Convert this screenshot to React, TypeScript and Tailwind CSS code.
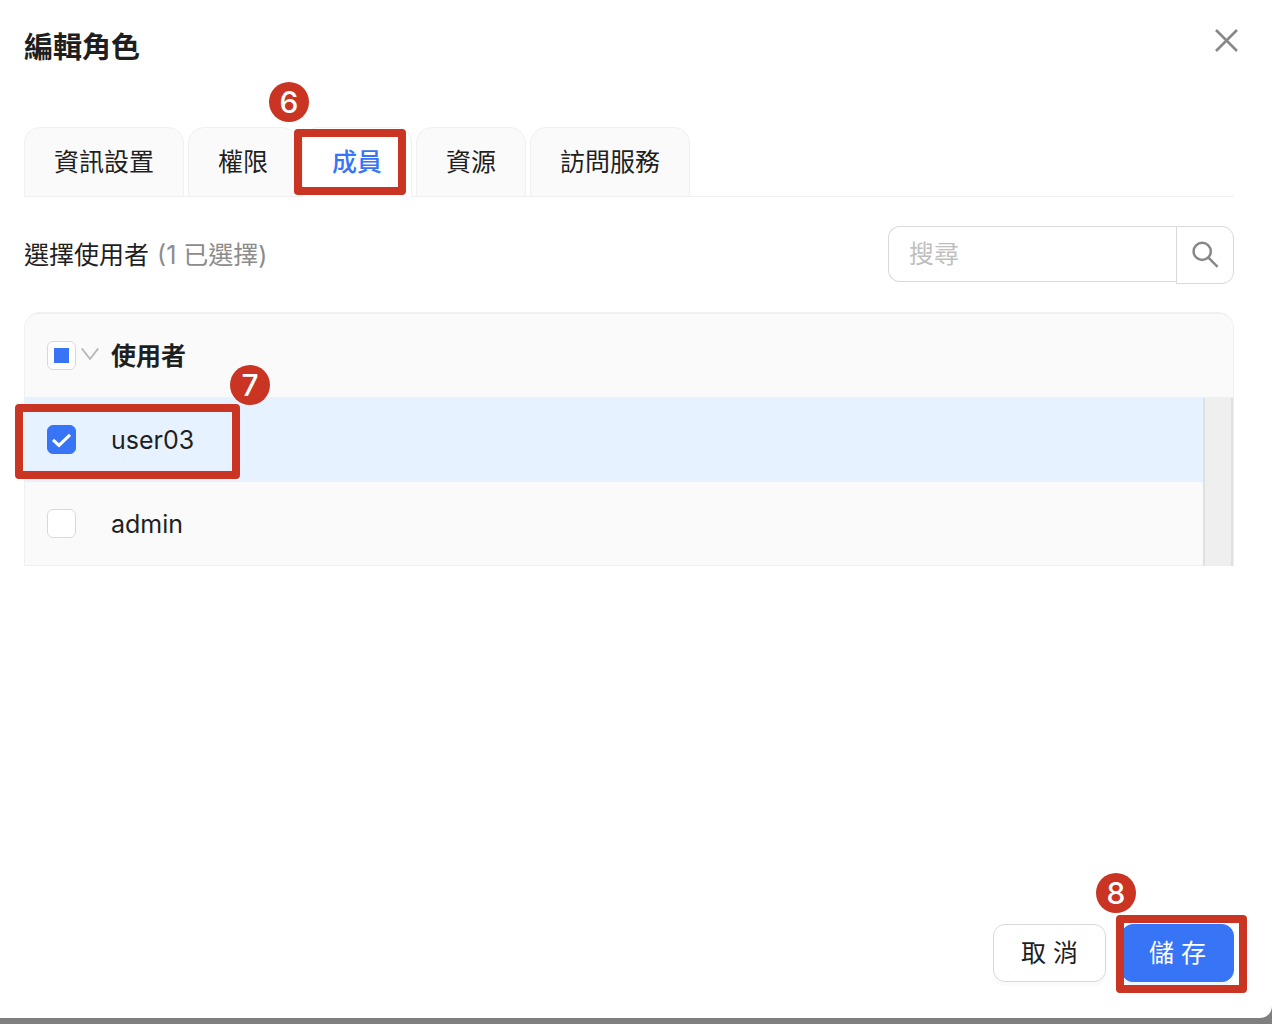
import { useState } from "react";
import type { ReactNode } from "react";

const TABS = ["資訊設置", "權限", "成員", "資源", "訪問服務"];
const USERS = ["user03", "admin"];

function StepBadge({ step, className }: { step: number; className: string }) {
  return (
    <span
      className={`absolute z-20 flex size-10 items-center justify-center rounded-full bg-[#c93423] text-[30px] font-medium leading-none text-white ${className}`}
    >
      {step}
    </span>
  );
}

function StepFrame({ className }: { className: string }) {
  return (
    <span
      className={`pointer-events-none absolute z-10 rounded-[4px] border-8 border-[#c93423] ${className}`}
    />
  );
}

function CheckBox({
  label,
  checked,
  mixed = false,
  onChange,
}: {
  label: string;
  checked: boolean;
  mixed?: boolean;
  onChange: () => void;
}) {
  return (
    <span className="grid size-[29px] shrink-0 place-items-center">
      <input
        type="checkbox"
        aria-label={label}
        checked={checked}
        ref={(el) => {
          if (el) el.indeterminate = mixed;
        }}
        onChange={onChange}
        className="col-start-1 row-start-1 size-[29px] appearance-none rounded-md border border-[#d9d9d9] bg-white checked:border-[#3875f6] checked:bg-[#3875f6]"
      />
      {mixed && (
        <span className="pointer-events-none col-start-1 row-start-1 size-[15px] bg-[#3875f6]" />
      )}
      {checked && !mixed && (
        <svg
          viewBox="0 0 29 29"
          className="pointer-events-none col-start-1 row-start-1 size-[29px]"
          fill="none"
          stroke="#fff"
          strokeWidth="3"
        >
          <path d="M6 14.8l6 5.6L23 9.8" />
        </svg>
      )}
    </span>
  );
}

function FooterButton({
  primary = false,
  children,
}: {
  primary?: boolean;
  children: ReactNode;
}) {
  return (
    <button
      type="button"
      className={`h-[58px] rounded-xl border px-[27px] ${
        primary
          ? "border-[#3875f6] bg-[#3875f6] text-white shadow-[0_4px_0_rgba(5,95,255,0.06)]"
          : "border-[#d9d9d9] bg-white shadow-[0_4px_0_rgba(0,0,0,0.02)]"
      }`}
    >
      {children}
    </button>
  );
}

export default function App() {
  const [activeTab, setActiveTab] = useState("成員");
  const [search, setSearch] = useState("");
  const [selected, setSelected] = useState<string[]>(["user03"]);

  const allSelected = selected.length === USERS.length;

  function toggleUser(name: string) {
    setSelected((prev) =>
      prev.includes(name) ? prev.filter((u) => u !== name) : [...prev, name]
    );
  }

  function toggleAll() {
    setSelected(allSelected ? [] : USERS);
  }

  return (
    <div className="flex min-h-screen flex-col bg-[#7f7f7f] pb-1.5 font-['Inter','Noto_Sans_CJK_TC',sans-serif] text-[25px] leading-9 text-[#1f1f1f]">
      <main className="flex flex-1 flex-col rounded-br-xl bg-white pt-7 pr-[38px] pb-9 pl-6">
        <header className="flex items-start justify-between">
          <h1 className="text-[29px] leading-10 font-bold">編輯角色</h1>
          <button type="button" aria-label="關閉" className="-mr-1">
            <svg
              viewBox="0 0 24 24"
              className="size-6"
              fill="none"
              stroke="#888"
              strokeWidth="2.6"
            >
              <path d="M2 2l21 21M23 2l-21 21" />
            </svg>
          </button>
        </header>

        <div
          role="tablist"
          className="mt-[59px] flex gap-1 border-b border-[#f0f0f0]"
        >
          {TABS.map((tab) => (
            <div key={tab} className="relative -mb-px">
              <button
                type="button"
                role="tab"
                aria-selected={tab === activeTab}
                onClick={() => setActiveTab(tab)}
                className={`h-[70px] rounded-t-2xl border border-[#f0f0f0] px-[29px] ${
                  tab === activeTab
                    ? "border-b-white bg-white font-medium text-[#3875f6]"
                    : "bg-[#fafafa]"
                }`}
              >
                {tab}
              </button>
              {tab === "成員" && (
                <>
                  <StepFrame className="top-0.5 right-1.5 bottom-0.5 -left-2" />
                  <StepBadge step={6} className="-top-[45px] -left-[33px]" />
                </>
              )}
            </div>
          ))}
        </div>

        <div className="mt-[29px] flex items-center justify-between">
          <p className="flex gap-2">
            選擇使用者
            <span className="text-[#8c8c8c]">({selected.length} 已選擇)</span>
          </p>
          <form
            className="flex items-start"
            onSubmit={(e) => e.preventDefault()}
          >
            <input
              type="text"
              aria-label="搜尋"
              placeholder="搜尋"
              value={search}
              onChange={(e) => setSearch(e.target.value)}
              className="h-14 w-72 rounded-l-xl border border-r-0 border-[#d9d9d9] px-5 outline-none placeholder:text-[#bfbfbf]"
            />
            <button
              type="submit"
              aria-label="搜尋"
              className="flex size-[58px] items-center justify-center rounded-r-xl border border-[#d9d9d9]"
            >
              <svg
                viewBox="0 0 28 28"
                className="size-7"
                fill="none"
                stroke="#888"
                strokeWidth="2.5"
              >
                <circle cx="11.2" cy="10.4" r="8.6" />
                <path d="M17.2 16.4l9.4 9.4" />
              </svg>
            </button>
          </form>
        </div>

        <div className="mt-7 rounded-t-2xl border border-t-2 border-b-0 border-[#f0f0f0]">
          <table className="w-full border-separate border-spacing-0 text-left">
            <thead>
              <tr>
                <th className="h-[84px] w-[86px] rounded-tl-[14px] border-b border-[#f0f0f0] bg-[#fafafa] py-0 pr-0 pl-[22px]">
                  <div className="flex items-center gap-[5px]">
                    <CheckBox
                      label="全選"
                      checked={allSelected}
                      mixed={selected.length > 0 && !allSelected}
                      onChange={toggleAll}
                    />
                    <svg
                      viewBox="0 0 18 16"
                      className="h-4 w-[18px]"
                      fill="none"
                      stroke="#b8b8b8"
                      strokeWidth="1.8"
                    >
                      <path d="M.8 .4L9 11 17.2.4" />
                    </svg>
                  </div>
                </th>
                <th
                  colSpan={2}
                  className="rounded-tr-[14px] border-b border-[#f0f0f0] bg-[#fafafa] p-0 font-bold"
                >
                  使用者
                </th>
              </tr>
            </thead>
            <tbody>
              {USERS.map((name, i) => {
                const checked = selected.includes(name);
                const bg = checked ? "bg-[#e6f2ff]" : "bg-[#fafafa]";
                return (
                  <tr key={name}>
                    <td
                      className={`relative h-[84px] border-b border-[#f0f0f0] py-0 pr-0 pl-[22px] ${bg}`}
                    >
                      <CheckBox
                        label={name}
                        checked={checked}
                        onChange={() => toggleUser(name)}
                      />
                      {name === "user03" && (
                        <>
                          <StepFrame className="top-1.5 -left-2.5 h-[75px] w-[225px]" />
                          <StepBadge
                            step={7}
                            className="-top-[33px] left-[205px]"
                          />
                        </>
                      )}
                    </td>
                    <td className={`border-b border-[#f0f0f0] p-0 ${bg}`}>
                      {name}
                    </td>
                    {/* scroll track */}
                    {i === 0 && (
                      <td
                        rowSpan={USERS.length}
                        className="w-[30px] border-x-2 border-[#e0e0e0] bg-[#efefef] p-0"
                      />
                    )}
                  </tr>
                );
              })}
            </tbody>
          </table>
        </div>

        <footer className="mt-auto flex justify-end gap-[15px]">
          <FooterButton>取 消</FooterButton>
          <div className="relative">
            <FooterButton primary>儲 存</FooterButton>
            <StepFrame className="-top-[9px] -right-[13px] -bottom-[11px] -left-[5px]" />
            <StepBadge step={8} className="-top-[51px] -left-[25px]" />
          </div>
        </footer>
      </main>
    </div>
  );
}
